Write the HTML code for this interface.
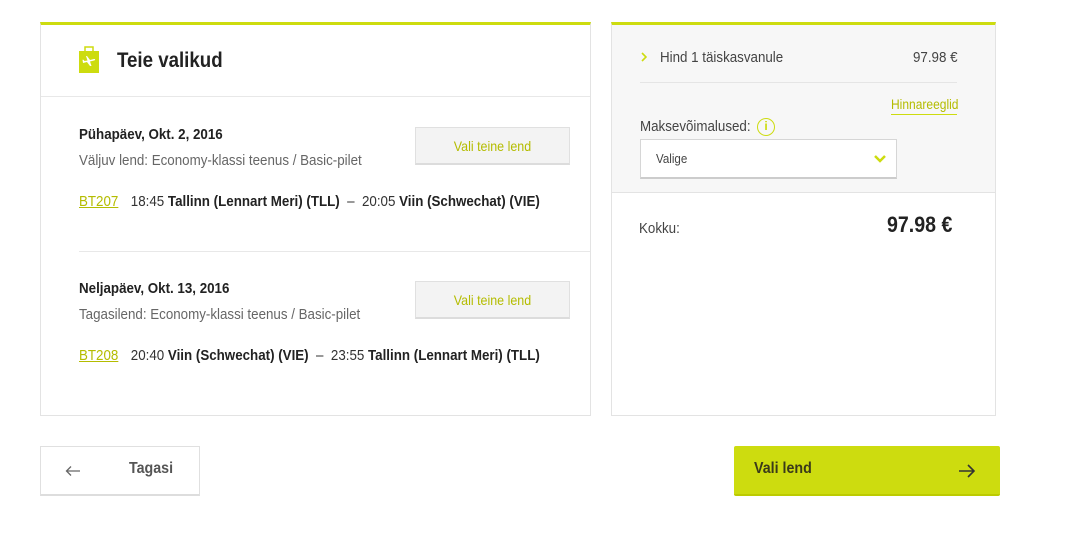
<!DOCTYPE html>
<html><head><meta charset="utf-8"><style>
*{margin:0;padding:0;box-sizing:border-box}
body{width:1092px;height:556px;background:#fff;font-family:"Liberation Sans",sans-serif;color:#333;position:relative;overflow:hidden}
.a{position:absolute;white-space:nowrap}
.t{transform:scaleX(0.89);transform-origin:left center}
.card{position:absolute;border:1px solid #e3e3e3;border-top:3px solid #cddc0f}
.btn2{position:absolute;width:155px;height:38px;background:#f3f3f3;border:1px solid #e0e0e0;border-bottom:2px solid #dcdcdc;color:#b4bc00;font-size:14px;text-align:center;line-height:36px}
.btn2 span{display:inline-block;transform:scaleX(0.89)}
.date{font-size:15px;font-weight:bold;color:#222}
.sub{font-size:15px;color:#666}
.fl{font-size:15px;color:#333}
.fl b{color:#222}
.fl u{color:#b4bc00;text-decoration-color:#b4bc00;margin-right:14px}
</style></head><body>
<div class="card" style="left:40px;top:22px;width:551px;height:394px"></div>
<div class="a" style="left:41px;top:96px;width:549px;height:1px;background:#e8e8e8"></div>
<div class="a" style="left:79px;top:251px;width:511px;height:1px;background:#e8e8e8"></div>
<svg class="a" style="left:78px;top:44px" width="22" height="30" viewBox="0 0 22 30"><path d="M7 7V3h8v4" fill="none" stroke="#cddc0f" stroke-width="1.5"/><rect x="1" y="7" width="20" height="22" fill="#cddc0f"/><path d="M5 19l4-1 3 4h1.5l-1.5-4.5 4-1c1.5-.4 1.5-1.5 0-1.5l-4 1-3-4H8l1.5 4.5-3 .5-1-1.2H4.5z" fill="#fff"/></svg>
<div class="a t" style="left:117px;top:49px;font-size:21px;font-weight:bold;color:#222">Teie valikud</div>

<div class="a t date" style="left:79px;top:126px">Pühapäev, Okt. 2, 2016</div>
<div class="a t sub" style="left:79px;top:152px">Väljuv lend: Economy-klassi teenus / Basic-pilet</div>
<div class="btn2" style="left:415px;top:127px"><span>Vali teine lend</span></div>
<div class="a t fl" style="left:79px;top:193px"><u>BT207</u>18:45 <b>Tallinn (Lennart Meri) (TLL)</b> &nbsp;–&nbsp; 20:05 <b>Viin (Schwechat) (VIE)</b></div>

<div class="a t date" style="left:79px;top:280px">Neljapäev, Okt. 13, 2016</div>
<div class="a t sub" style="left:79px;top:306px">Tagasilend: Economy-klassi teenus / Basic-pilet</div>
<div class="btn2" style="left:415px;top:281px"><span>Vali teine lend</span></div>
<div class="a t fl" style="left:79px;top:347px"><u>BT208</u>20:40 <b>Viin (Schwechat) (VIE)</b> &nbsp;–&nbsp; 23:55 <b>Tallinn (Lennart Meri) (TLL)</b></div>

<div class="card" style="left:611px;top:22px;width:385px;height:394px;background:#fff"></div>
<div class="a" style="left:612px;top:25px;width:383px;height:168px;background:#f7f7f7;border-bottom:1px solid #e3e3e3"></div>
<svg class="a" style="left:641px;top:52px" width="6" height="10"><path d="M1 1l4 4-4 4" fill="none" stroke="#cddc0f" stroke-width="1.6"/></svg>
<div class="a t" style="left:660px;top:49px;font-size:15px;color:#444">Hind 1 täiskasvanule</div>
<div class="a t" style="left:913px;top:49px;font-size:15px;color:#444">97.98 €</div>
<div class="a" style="left:640px;top:82px;width:317px;height:1px;background:#e5e5e5"></div>
<div class="a" style="left:891px;top:98px;width:66px;height:17px;border-bottom:1px solid #cddc0f"></div>
<div class="a t" style="left:891px;top:97px;font-size:13.5px;color:#b4bc00">Hinnareeglid</div>
<div class="a t" style="left:640px;top:118px;font-size:15px;color:#444">Maksevõimalused:</div>
<div class="a" style="left:757px;top:118px;width:18px;height:18px;border:1.5px solid #cddc0f;border-radius:50%;color:#cddc0f;font-size:12px;font-weight:bold;text-align:center;line-height:15px">i</div>
<div class="a" style="left:640px;top:139px;width:257px;height:40px;background:#fff;border:1px solid #d6d6d6;border-bottom:2px solid #ccc"></div>
<div class="a t" style="left:656px;top:151px;font-size:13px;color:#444">Valige</div>
<svg class="a" style="left:874px;top:155px" width="12" height="8"><path d="M1 1l5 5 5-5" fill="none" stroke="#cddc0f" stroke-width="2.5"/></svg>
<div class="a t" style="left:639px;top:220px;font-size:15px;color:#444">Kokku:</div>
<div class="a t" style="left:887px;top:212px;font-size:22px;font-weight:bold;color:#222">97.98 €</div>

<div class="a" style="left:40px;top:446px;width:160px;height:50px;border:1px solid #e0e0e0;border-bottom:2px solid #ddd;background:#fff"></div>
<svg class="a" style="left:65px;top:465px" width="16" height="12"><path d="M15 6H2M6 1.5L1.5 6 6 10.5" fill="none" stroke="#666" stroke-width="1.3"/></svg>
<div class="a t" style="left:129px;top:460px;font-size:16px;font-weight:bold;color:#555">Tagasi</div>
<div class="a" style="left:734px;top:446px;width:266px;height:50px;background:#cddc0f;border-bottom:2px solid #bccb00;border-radius:2px"></div>
<div class="a t" style="left:754px;top:460px;font-size:16px;font-weight:bold;color:#3a3a1a">Vali lend</div>
<svg class="a" style="left:958px;top:463px" width="18" height="16"><path d="M1 8h15M10 2l6 6-6 6" fill="none" stroke="#333" stroke-width="1.6"/></svg>
</body></html>
